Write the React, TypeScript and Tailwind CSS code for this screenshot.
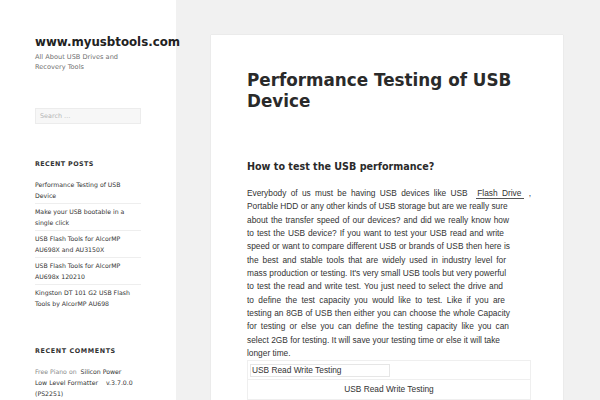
import React from "react";

const posts: string[][] = [
  ["Performance Testing of USB", "Device"],
  ["Make your USB bootable in a", "single click"],
  ["USB Flash Tools for AlcorMP", "AU698X and AU3150X"],
  ["USB Flash Tools for AlcorMP", "AU698x 120210"],
  ["Kingston DT 101 G2 USB Flash", "Tools by AlcorMP AU698"],
];

// each body line with the x it ends at (card text starts at x=246)
const lines: { text: string; w?: number }[] = [
  { text: "Portable HDD or any other kinds of USB storage but are we really sure", w: 260 },
  { text: "about the transfer speed of our devices? and did we really know how", w: 262 },
  { text: "to test the USB device? If you want to test your USB read and write", w: 257 },
  { text: "speed or want to compare different USB or brands of USB then here is", w: 263 },
  { text: "the best and stable tools that are widely used in industry level for", w: 259 },
  { text: "mass production or testing. It's very small USB tools but very powerful", w: 259 },
  { text: "to test the read and write test. You just need to select the drive and", w: 256 },
  { text: "to define the test capacity you would like to test. Like if you are", w: 258 },
  { text: "testing an 8GB of USB then either you can choose the whole Capacity", w: 263 },
  { text: "for testing or else you can define the  testing capacity like you can", w: 262 },
  { text: "select 2GB for testing. It will save your testing time or else it will take", w: 253 },
  { text: "longer time." },
];

function Sidebar() {
  return (
    <aside className="w-[176px] shrink-0 bg-white pl-[35px] pr-[35px] pt-[35px] font-['DejaVu_Sans',sans-serif] text-[#333]">
      <h1 className="text-[11.8px] leading-[14px] font-bold whitespace-nowrap text-[#222]">www.myusbtools.com</h1>
      <p className="mt-[3px] text-[6.6px] leading-[10px] text-[#707070]">
        All About USB Drives and
        <br />
        Recovery Tools
      </p>

      <div className="mt-[36px] h-[16px] w-[106px] border border-[#ececec] bg-[#f7f7f7] pl-[4px] text-[6.4px] leading-[14px] text-[#b5b5b5]">
        Search …
      </div>

      <h2 className="mt-[36px] text-[6.4px] leading-[9px] font-bold tracking-[0.4px] text-[#333]">RECENT POSTS</h2>
      <ul className="mt-[10px]">
        {posts.map((p, i) => (
          <li
            key={i}
            className={`text-[6.2px] leading-[11px] text-[#333] pb-[2px] ${i > 0 ? "border-t border-[#eeeeee] pt-[2px]" : ""}`}
          >
            {p[0]}
            <br />
            {p[1]}
          </li>
        ))}
      </ul>

      <h2 className="mt-[36px] text-[6.4px] leading-[9px] font-bold tracking-[0.6px] text-[#333]">RECENT COMMENTS</h2>
      <p className="mt-[10px] text-[6.2px] leading-[11px] text-[#333] whitespace-pre">
        <span className="text-[#8a8a8a]">Free Piano on </span> Silicon Power
        <br />
        {"Low Level Formatter    v.3.7.0.0"}
        <br />
        (PS2251)
      </p>
    </aside>
  );
}

function Article() {
  return (
    <article className="w-[352px] bg-white pl-[36px] pr-[32px] pt-[35px] pb-[40px] shadow-[0_0_1px_rgba(0,0,0,0.15)]">
      <h1 className="font-['DejaVu_Sans',sans-serif] text-[16.8px] leading-[21px] font-bold text-[#2a2a2a]">
        Performance Testing of USB
        <br />
        Device
      </h1>

      <h2 className="mt-[48px] font-['DejaVu_Sans',sans-serif] text-[9.6px] leading-[14px] font-bold text-[#2a2a2a]">
        How to test the USB performance?
      </h2>

      <div className="mt-[13px] font-['Liberation_Sans',Arial,sans-serif] text-[8.33px] leading-[13.33px] text-[#333]">
        <div className="w-[284px] whitespace-pre [text-align-last:justify]">
          {"Everybody of us must be having USB devices like USB  "}
          <span className="border-b border-[#555] pl-[1px] pr-[3px]">Flash Drive</span>
          {" ,"}
        </div>
        {lines.map((l, i) => (
          <div
            key={i}
            className={l.w ? "whitespace-nowrap [text-align-last:justify]" : "whitespace-nowrap"}
            style={l.w ? { width: l.w } : undefined}
          >
            {l.text}
          </div>
        ))}
      </div>

      <table className="w-[284px] border-collapse font-['Liberation_Sans',Arial,sans-serif] text-[8.33px] text-[#333]">
        <tbody>
          <tr>
            <td className="border border-[#efefef] px-[2px] pt-[3px] pb-[2px]">
              <div className="w-[140px] border border-[#e6e6e6] pl-[1px] leading-[11px]">USB Read Write Testing</div>
            </td>
          </tr>
          <tr>
            <td className="border border-[#efefef] py-[4px] text-center leading-[11px]">USB Read Write Testing</td>
          </tr>
        </tbody>
      </table>
    </article>
  );
}

export default function App() {
  return (
    <div className="flex h-[400px] w-[600px] overflow-hidden bg-[#f1f1f1]">
      <Sidebar />
      <main className="flex-1 pl-[35px] pt-[35px]">
        <Article />
      </main>
    </div>
  );
}
